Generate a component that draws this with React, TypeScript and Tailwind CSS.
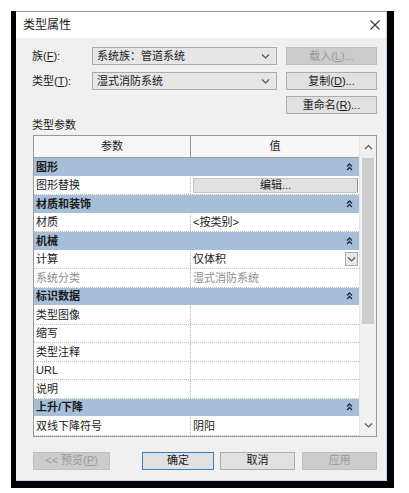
import type { ReactNode } from "react";

type Row =
  | { kind: "group"; label: string }
  | { kind: "param"; label: string; value?: string; muted?: boolean; editor?: "button" | "select" };

const ROWS: Row[] = [
  { kind: "group", label: "图形" },
  { kind: "param", label: "图形替换", value: "编辑...", editor: "button" },
  { kind: "group", label: "材质和装饰" },
  { kind: "param", label: "材质", value: "<按类别>" },
  { kind: "group", label: "机械" },
  { kind: "param", label: "计算", value: "仅体积", editor: "select" },
  { kind: "param", label: "系统分类", value: "湿式消防系统", muted: true },
  { kind: "group", label: "标识数据" },
  { kind: "param", label: "类型图像" },
  { kind: "param", label: "缩写" },
  { kind: "param", label: "类型注释" },
  { kind: "param", label: "URL" },
  { kind: "param", label: "说明" },
  { kind: "group", label: "上升/下降" },
  { kind: "param", label: "双线下降符号", value: "阴阳" },
];

function Chevron({ up = false, className = "" }: { up?: boolean; className?: string }) {
  return (
    <svg width="9" height="6" viewBox="0 0 9 6" className={className}>
      <path d={up ? "M1 5 L4.5 1.5 L8 5" : "M1 1.5 L4.5 5 L8 1.5"} stroke="#555" strokeWidth="1.2" fill="none" />
    </svg>
  );
}

function Collapse() {
  return (
    <svg width="7" height="8" viewBox="0 0 7 8">
      <path d="M1 3.5 L3.5 1 L6 3.5 M1 7 L3.5 4.5 L6 7" stroke="#1f2a38" strokeWidth="1.3" fill="none" />
    </svg>
  );
}

function Btn({ children, disabled, primary, className = "" }: { children: ReactNode; disabled?: boolean; primary?: boolean; className?: string }) {
  return (
    <div
      className={`flex h-[18px] items-center justify-center border text-[11px] ${
        disabled
          ? "border-[#bfbfbf] bg-[#cccccc] text-[#9a9a9a]"
          : primary
          ? "border-[#3c7fc4] bg-[#e1e1e1] text-[#1a1a1a]"
          : "border-[#adadad] bg-[#e1e1e1] text-[#1a1a1a]"
      } ${className}`}
    >
      {children}
    </div>
  );
}

function Combo({ text }: { text: string }) {
  return (
    <div className="flex h-[18px] w-[185px] items-center justify-between border border-[#acacac] bg-[#e6e6e6] pl-[4px] pr-[6px] text-[11px] text-[#1a1a1a]">
      <span>{text}</span>
      <Chevron />
    </div>
  );
}

export default function App() {
  return (
    <div className="h-[493px] w-[409px] bg-white pl-[11px] pt-[11px] font-['Liberation_Sans','Noto_Sans_CJK_SC',sans-serif]">
      <div className="h-[477px] w-[383px] bg-black pb-[7px] pl-[5px] pr-[7px]">
        <div className="flex h-full flex-col border-t border-r border-b border-t-[#7d98b6] border-r-[#bcd6ec] border-b-[#bcd6ec] bg-[#f0f0f0]">
          {/* title bar */}
          <div className="flex h-[26px] shrink-0 items-center justify-between bg-white pl-[7px] pr-[6px]">
            <span className="text-[12px] text-[#1a1a1a]">类型属性</span>
            <svg width="10" height="10" viewBox="0 0 10 10">
              <path d="M0.5 0.5 L9.5 9.5 M9.5 0.5 L0.5 9.5" stroke="#333" strokeWidth="1.1" />
            </svg>
          </div>

          <div className="flex flex-1 flex-col pl-[16px] pr-[9px] pt-[9px]">
            <div className="flex h-[18px] items-center">
              <span className="w-[60px] text-[11px] text-[#1a1a1a]">族(<u>F</u>):</span>
              <Combo text="系统族：管道系统" />
              <Btn disabled className="ml-[9px] w-[91px]">载入(<u>L</u>)...</Btn>
            </div>
            <div className="mt-[7px] flex h-[18px] items-center">
              <span className="w-[60px] text-[11px] text-[#1a1a1a]">类型(<u>T</u>):</span>
              <Combo text="湿式消防系统" />
              <Btn className="ml-[9px] w-[91px]">复制(<u>D</u>)...</Btn>
            </div>
            <div className="mt-[6px] flex justify-end">
              <Btn className="w-[91px]">重命名(<u>R</u>)...</Btn>
            </div>
            <div className="mt-[3px] flex h-[16px] items-center text-[11px] text-[#1a1a1a]">类型参数</div>

            {/* property grid */}
            <div className="ml-px mt-[2px] flex border border-[#9a9a9a] bg-white">
              <div className="w-[327px]">
                <div className="flex h-[22px] border-b border-[#9a9a9a] bg-[#f7f7f7] text-[11px] text-[#1a1a1a]">
                  <div className="flex w-[157px] items-center justify-center border-r border-[#9a9a9a]">参数</div>
                  <div className="flex flex-1 items-center justify-center">值</div>
                </div>
                {ROWS.map((row, i) =>
                  row.kind === "group" ? (
                    <div key={i} className="flex h-[18.5px] items-center justify-between border-b border-white bg-[#a7bed8] pl-[2px] pr-[6px] text-[11px] font-bold text-[#1a1a1a]">
                      <span>{row.label}</span>
                      <Collapse />
                    </div>
                  ) : (
                    <div key={i} className={`flex h-[18.5px] border-b border-dotted border-[#bdbdbd] text-[11px] ${row.muted ? "text-[#8e8e8e]" : "text-[#1a1a1a]"}`}>
                      <div className="flex w-[157px] items-center border-r border-dotted border-[#bdbdbd] pl-[2px]">{row.label}</div>
                      <div className="flex flex-1 items-center pl-[2px]">
                        {row.editor === "button" ? (
                          <div className="mr-[1px] flex h-[15px] flex-1 items-center justify-center border border-[#c4c4c4] border-r-[#8f8f8f] bg-[#e1e1e1]">{row.value}</div>
                        ) : row.editor === "select" ? (
                          <div className="flex flex-1 items-center justify-between">
                            <span>{row.value}</span>
                            <div className="mr-[1px] flex h-[14px] w-[13px] items-center justify-center border border-[#a8a8a8] bg-[#e8e8e8]">
                              <Chevron />
                            </div>
                          </div>
                        ) : (
                          <span>{row.value}</span>
                        )}
                      </div>
                    </div>
                  )
                )}
              </div>
              {/* scrollbar */}
              <div className="flex w-[17px] flex-col border-l border-[#e6e6e6] bg-[#f0f0f0]">
                <div className="flex h-[22px] items-center justify-center">
                  <Chevron up />
                </div>
                <div className="mx-[2px] h-[166px] bg-[#cdcdcd]" />
                <div className="flex-1" />
                <div className="flex h-[22px] items-center justify-center">
                  <Chevron />
                </div>
              </div>
            </div>

            <div className="mt-[15px] flex items-center">
              <Btn disabled className="ml-px w-[77px]">&lt;&lt; 预览(<u>P</u>)</Btn>
              <div className="flex-1" />
              <Btn primary className="w-[72px]">确定</Btn>
              <Btn className="ml-[6px] w-[75px]">取消</Btn>
              <Btn disabled className="ml-[7px] w-[75px]">应用</Btn>
            </div>
          </div>
        </div>
      </div>
    </div>
  );
}
